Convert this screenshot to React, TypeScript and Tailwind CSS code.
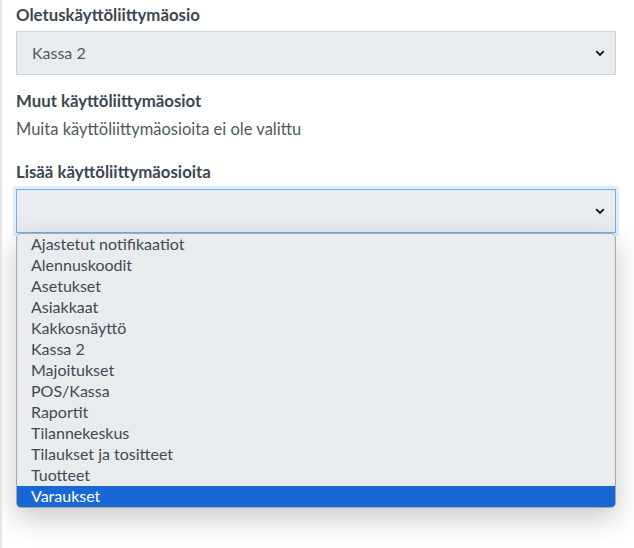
import React from "react";

const items = [
  "Ajastetut notifikaatiot",
  "Alennuskoodit",
  "Asetukset",
  "Asiakkaat",
  "Kakkosnäyttö",
  "Kassa 2",
  "Majoitukset",
  "POS/Kassa",
  "Raportit",
  "Tilannekeskus",
  "Tilaukset ja tositteet",
  "Tuotteet",
  "Varaukset",
];

function Chevron() {
  return (
    <svg width="10" height="7" viewBox="0 0 10 7" className="shrink-0">
      <path d="M1.2 1.2 L5 5 L8.8 1.2" fill="none" stroke="#111" strokeWidth="1.8" />
    </svg>
  );
}

export default function App() {
  return (
    <div
      className="relative min-h-[548px] w-[634px] bg-white border-l-2 border-[#e6e6e6] overflow-hidden"
      style={{ fontFamily: "Lato, 'Noto Sans', sans-serif" }}
    >
      <div className="pl-[14px] pt-[4px] w-[616px]">
        <div className="h-[22px] leading-[22px] text-[16.8px] font-bold text-[#3b4752]">Oletuskäyttöliittymäosio</div>
        <div className="mt-[5px] h-[44px] w-[600px] flex items-center justify-between pl-[15px] pr-[10px] bg-[#e9ecef] border border-[#ced4da] text-[16px] text-[#4f5961]">
          <span>Kassa 2</span>
          <Chevron />
        </div>
        <div className="mt-[15px] h-[22px] leading-[22px] text-[16.8px] font-bold text-[#3b4752]">Muut käyttöliittymäosiot</div>
        <div className="mt-[6px] h-[22px] leading-[22px] text-[16.5px] text-[#4f5961]">Muita käyttöliittymäosioita ei ole valittu</div>
        <div className="mt-[21px] h-[22px] leading-[22px] text-[16.8px] font-bold text-[#3b4752]">Lisää käyttöliittymäosioita</div>
        <div className="relative mt-[6px] w-[600px]">
          <div className="h-[44px] w-[600px] flex items-center justify-end pr-[10px] bg-[#e9ecef] border border-[#74b0e6] shadow-[0_0_0_3px_rgba(128,189,255,0.25)]">
            <Chevron />
          </div>
          <div className="absolute left-0 top-[44px] w-[600px] rounded-[5px] border border-[#a9a9a9] bg-[#e9ecef] overflow-hidden shadow-[0_10px_28px_rgba(0,0,0,0.22)]">
            {items.map((it) => (
              <div
                key={it}
                className={
                  it === "Varaukset"
                    ? "h-[21px] leading-[20px] pl-[14px] text-[16px] bg-[#1967d2] text-white"
                    : "h-[21px] leading-[20px] pl-[14px] text-[16px] text-[#3f4a54]"
                }
              >
                {it}
              </div>
            ))}
          </div>
        </div>
      </div>
    </div>
  );
}
